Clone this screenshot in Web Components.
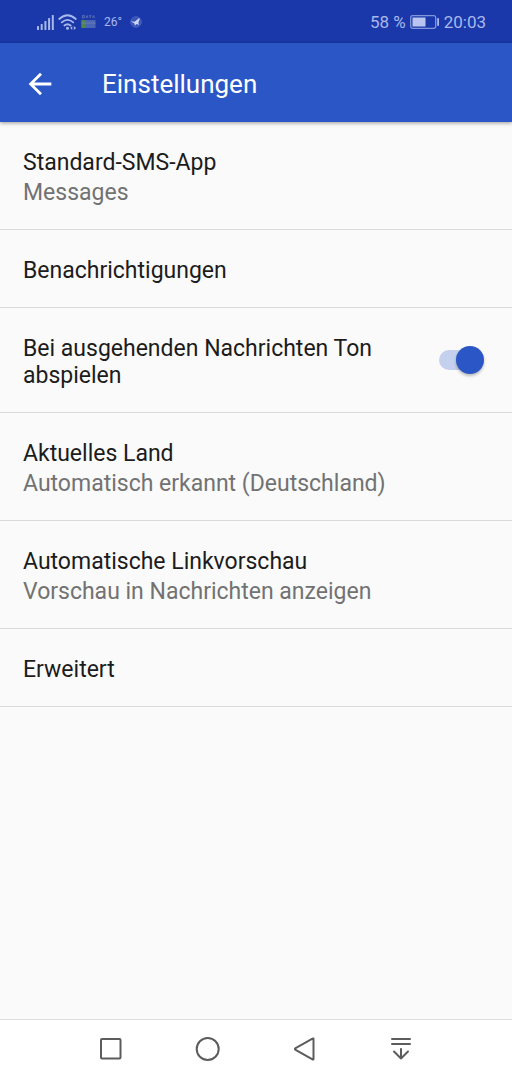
<!DOCTYPE html>
<html lang="de">
<head>
<meta charset="utf-8">
<meta name="viewport" content="width=device-width, initial-scale=1">
<title>Einstellungen</title>
<style>
  body { margin: 0; font-family: Roboto, "Noto Sans", sans-serif; background: #fafafa; color: #1c1c1c; }
</style>
</head>
<body>
<settings-screen></settings-screen>
<script>
const define = (name, html) => {
  const template = document.createElement('template');
  template.innerHTML = html;
  customElements.define(name, class extends HTMLElement {
    constructor() {
      super();
      this.attachShadow({ mode: 'open' }).append(template.content.cloneNode(true));
    }
  });
};

define('status-bar', `
  <style>
    :host { display: flex; justify-content: space-between; align-items: center; height: 43px;
      padding: 0 26px 0 37px; background: #1a38aa; color: #a9b8ec; font-size: 17px; line-height: 20px; }
    div { display: flex; align-items: center; gap: 4px; }
    svg { display: block; }
    .temp { font-size: 12px; margin: 0 4px; }
  </style>
  <div>
    <svg width="17" height="16" viewBox="0 0 17 16" fill="#a9b8ec" aria-hidden="true">
      <rect x="0" y="12" width="2" height="4" rx=".6"/><rect x="3.7" y="10" width="2" height="6" rx=".6"/>
      <rect x="7.4" y="7" width="2" height="9" rx=".6"/><rect x="11.1" y="4" width="2" height="12" rx=".6"/>
      <rect x="14.8" y="1" width="2" height="15" rx=".6"/>
    </svg>
    <svg width="19" height="16" viewBox="0 0 19 16" fill="none" stroke="#a9b8ec" stroke-width="1.8" stroke-linecap="round" aria-hidden="true">
      <path d="M1.2 5Q9.5-2.6 17.8 5M3.8 8.4Q9.5 3.4 15.2 8.4M6.4 11.5Q9.5 8.9 12.6 11.5"/>
      <circle cx="9.5" cy="14.2" r="1.5" fill="#a9b8ec" stroke="none"/>
      <path d="M14.2 12v4l-2-2zM15.8 12v4l2.3-2z" fill="#a9b8ec" stroke="none"/>
    </svg>
    <svg width="15" height="14" viewBox="0 0 15 14" aria-hidden="true">
      <path d="M1.5 3V.5h1.8V3zM5 3l1-2.5L7 3M8 .7h2.4M9.2.7V3M11.5 3l1-2.5 1 2.5" fill="none" stroke="#7181b4" stroke-width=".7"/>
      <rect x=".5" y="5" width="14" height="8" fill="#4a66b4"/><rect x=".5" y="5" width="4" height="8" fill="#53864b"/>
      <path d="M.5 8h14" stroke="#6f86b4" stroke-width=".8"/>
    </svg>
    <span class="temp">26°</span>
    <svg width="12" height="12" viewBox="0 0 12 12" aria-hidden="true">
      <circle cx="6" cy="6" r="5.3" fill="#3854b7" stroke="#5870c7" stroke-width=".7"/>
      <path d="M.8 5.3 4.6 5.8 9.2 2 9.8 3 8.4 6.5 9 9 6.5 7.9 4.9 9.8 4.4 7.5z" fill="#cbd5f8"/>
    </svg>
  </div>
  <div><span>58 %</span>
    <svg width="30" height="16" viewBox="0 0 30 16" aria-hidden="true">
      <rect x=".7" y="1.7" width="25" height="12.6" rx="2" fill="none" stroke="#8295db" stroke-width="1.3"/>
      <rect x="2.5" y="3.5" width="13" height="9" fill="#b9c5f0"/><rect x="27.2" y="4" width="1.8" height="8" rx=".8" fill="#a9b8ec"/>
    </svg><time>20:03</time>
  </div>`);

define('app-bar', `
  <style>
    :host { display: flex; align-items: center; box-sizing: border-box; height: 79px; padding: 2px 23px 0; gap: 45px;
      position: relative; background: #2a56c6; color: #fff; box-shadow: 0 1px 4px rgba(0,0,0,.4); }
    button { display: flex; border: 0; margin: 0; padding: 0; background: none; color: inherit; }
    h1 { margin: 0; font-size: 26px; line-height: 32px; font-weight: 400; }
  </style>
  <button type="button" aria-label="Zurück">
    <svg width="34" height="34" viewBox="0 0 24 24" fill="currentColor"><path d="M20 11H7.83l5.59-5.59L12 4l-8 8 8 8 1.41-1.41L7.83 13H20z"/></svg>
  </button>
  <h1><slot></slot></h1>`);

define('setting-row', `
  <style>
    :host { display: flex; align-items: center; justify-content: space-between; gap: 48px;
      padding: 0 23px; border-bottom: 1px solid #d9d9d9; font-size: 23px; line-height: 27px; }
    .text { display: flex; flex-direction: column; gap: 4px; padding: 27px 0 23px; }
    ::slotted([slot=summary]) { color: #727272; line-height: 26px; }
  </style>
  <div class="text"><slot></slot><slot name="summary"></slot></div>
  <slot name="control"></slot>`);

define('toggle-switch', `
  <style>
    :host { display: block; flex: none; margin: 0 4px; }
    input { appearance: none; display: flex; align-items: center; width: 46px; height: 30px; margin: 0; position: relative; }
    input::before { content: ""; width: 40px; height: 20px; border-radius: 10px; background: #c5d0ee; }
    input::after { content: ""; position: absolute; right: 1px; top: 1px; width: 28px; height: 28px; border-radius: 50%;
      background: #2a56c6; box-shadow: 0 2px 3px rgba(0,0,0,.25); }
    input:not(:checked)::after { right: 18px; background: #f1f1f1; }
  </style>
  <input type="checkbox" role="switch" checked aria-label="Bei ausgehenden Nachrichten Ton abspielen">`);

define('nav-bar', `
  <style>
    :host { display: flex; justify-content: center; gap: 65px; align-items: center; box-sizing: border-box; height: 61px;
      padding-bottom: 2px; border-top: 1px solid #dedede; background: #fff; }
    button { display: flex; border: 0; margin: 0; padding: 0; background: none; }
    svg { fill: none; stroke: #5c5c5c; stroke-width: 2; stroke-linejoin: round; stroke-linecap: round; }
  </style>
  <button type="button" aria-label="Letzte Apps"><svg width="32" height="32" viewBox="0 0 32 32"><rect x="6" y="6" width="19.5" height="19.5" rx="1"/></svg></button>
  <button type="button" aria-label="Startbildschirm"><svg width="32" height="32" viewBox="0 0 32 32"><circle cx="15.7" cy="16" r="11"/></svg></button>
  <button type="button" aria-label="Zurück"><svg width="32" height="32" viewBox="0 0 32 32"><path d="M24.5 6.2v19.6q0 1.2-1 .6L6.6 16.9q-1.4-.9 0-1.8L23.5 5.6q1-.6 1 .6z"/></svg></button>
  <button type="button" aria-label="Benachrichtigungsfeld"><svg width="32" height="32" viewBox="0 0 32 32"><path d="M6 6h18M6 11h18M15 16v9.5M8 18.5l7 7 7-7"/></svg></button>`);

define('settings-screen', `
  <style>
    :host { display: flex; flex-direction: column; min-height: 100vh; }
    main { flex: 1; }
  </style>
  <status-bar></status-bar>
  <app-bar>Einstellungen</app-bar>
  <main>
    <setting-row><span>Standard-SMS-App</span><span slot="summary">Messages</span></setting-row>
    <setting-row><span>Benachrichtigungen</span></setting-row>
    <setting-row><span>Bei ausgehenden Nachrichten Ton abspielen</span><toggle-switch slot="control"></toggle-switch></setting-row>
    <setting-row><span>Aktuelles Land</span><span slot="summary">Automatisch erkannt (Deutschland)</span></setting-row>
    <setting-row><span>Automatische Linkvorschau</span><span slot="summary">Vorschau in Nachrichten anzeigen</span></setting-row>
    <setting-row><span>Erweitert</span></setting-row>
  </main>
  <nav-bar></nav-bar>`);
</script>
</body>
</html>
